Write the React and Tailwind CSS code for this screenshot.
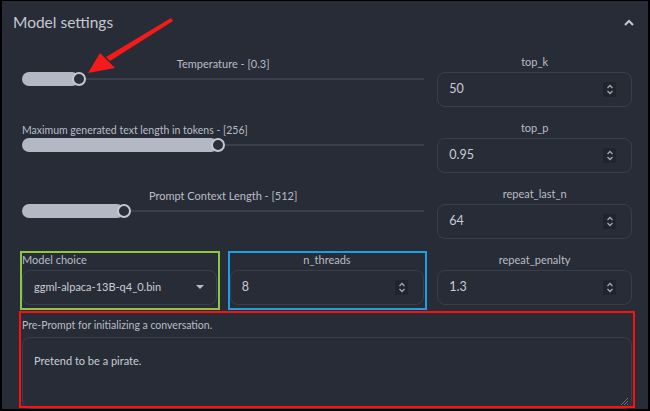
// Model settings panel – llama chat UI, with annotation overlays

import React from "react";

const Spinner = () => (
  <div className="w-[13px] h-[15px] bg-[#21242d] flex items-center justify-center">
    <svg width="8" height="11" viewBox="0 0 8 11" fill="none">
      <path d="M1.5 4 L4 1.5 L6.5 4" stroke="#a3a8b4" strokeWidth="1.3" />
      <path d="M1.5 7 L4 9.5 L6.5 7" stroke="#a3a8b4" strokeWidth="1.3" />
    </svg>
  </div>
);

const NumberField = ({ label, value }) => (
  <div className="flex flex-col">
    <div className="h-[14px] text-center text-[11px] leading-[14px] text-[#b9bdc7]">{label}</div>
    <div className="mt-[3px] h-[35px] rounded-lg border border-[#3a3e4a] flex items-center justify-between pl-[11px] pr-[15px]">
      <span className="text-[12.5px] text-[#c9cdd6]">{value}</span>
      <Spinner />
    </div>
  </div>
);

const Slider = ({ label, percent, centered = true }) => (
  <div className="col-span-2 flex flex-col">
    <div
      className={`h-[14px] mt-[2px] leading-[14px] text-[#b9bdc7] ${centered ? "text-center text-[11px]" : "text-left text-[10.5px]"}`}
    >
      {label}
    </div>
    <div className="relative mt-[1px] h-[14px] flex items-center">
      <div className="w-full h-[2px] bg-[#3a3f4b]" />
      <div
        className="absolute left-0 h-[14px] rounded-full bg-[#b4b8c5]"
        style={{ width: `${percent}%` }}
      />
      <div
        className="absolute w-[14px] h-[14px] -ml-[7px] rounded-full bg-[#2b2f3a] border-2 border-[#c3c7d2]"
        style={{ left: `${percent}%` }}
      />
    </div>
  </div>
);

export default function App() {
  return (
    <div
      className="w-[650px] h-[411px] bg-black pt-[1px] pl-[2px] pr-[2px] pb-[2px]"
      style={{ fontFamily: 'Lato, "Open Sans", sans-serif' }}
    >
      <div className="relative w-full h-full bg-[#282c37] overflow-hidden">
        {/* Header */}
        <div className="flex items-center justify-between pl-[11px] pr-[14px] h-[43px]">
          <span className="text-[15.5px] text-[#c4c8d1]">Model settings</span>
          <svg width="10" height="7" viewBox="0 0 10 7" fill="none">
            <path d="M1 6 L5 2 L9 6" stroke="#c4c8d1" strokeWidth="2" />
          </svg>
        </div>

        {/* Settings grid */}
        <div className="grid grid-cols-3 gap-x-[13px] gap-y-[14px] pl-[20px] pr-[16px] pt-[11px]">
          <Slider label="Temperature - [0.3]" percent={14.2} />
          <NumberField label="top_k" value="50" />

          <Slider label="Maximum generated text length in tokens - [256]" percent={48.6} centered={false} />
          <NumberField label="top_p" value="0.95" />

          <Slider label="Prompt Context Length - [512]" percent={25.4} />
          <NumberField label="repeat_last_n" value="64" />

          {/* Model choice */}
          <div className="relative flex flex-col">
            <div className="h-[14px] text-[11px] leading-[14px] text-[#b9bdc7]">Model choice</div>
            <div className="mt-[3px] h-[35px] rounded-lg border border-[#3a3e4a] flex items-center justify-between pl-[11px] pr-[12px]">
              <span className="text-[11px] text-[#c9cdd6]">ggml-alpaca-13B-q4_0.bin</span>
              <svg width="8" height="5" viewBox="0 0 8 5">
                <path d="M0 0 L8 0 L4 4 Z" fill="#b9bdc7" />
              </svg>
            </div>
            <div className="absolute -left-[2px] -right-[3px] -top-[2px] -bottom-[5px] border-2 border-[#8dc63f]" />
          </div>

          <div className="relative">
            <NumberField label="n_threads" value="8" />
            <div className="absolute -left-[2px] -right-[3px] -top-[2px] -bottom-[5px] border-2 border-[#1ba1e2]" />
          </div>

          <NumberField label="repeat_penalty" value="1.3" />

          {/* Pre-prompt */}
          <div className="relative col-span-3 flex flex-col -mt-[6px]">
            <div className="h-[14px] mt-[5px] text-[10.5px] leading-[14px] text-[#b9bdc7]">
              Pre-Prompt for initializing a conversation.
            </div>
            <div className="relative mt-[5px] h-[72px] rounded-lg border border-[#3a3e4a] px-[11px] pt-[9px]">
              <span className="text-[11px] text-[#c9cdd6]">Pretend to be a pirate.</span>
              <svg className="absolute right-[2px] bottom-[2px]" width="10" height="10" viewBox="0 0 10 10">
                <path d="M9 2 L2 9 M9 5 L5 9 M9 8 L8 9" stroke="#6b7080" strokeWidth="1" />
              </svg>
            </div>
            <div className="absolute -left-[3px] -right-[3px] -top-[2px] h-[97px] border-2 border-[#ff1010]" />
          </div>
        </div>

        {/* Red annotation arrow */}
        <svg className="absolute left-0 top-0" width="200" height="90" viewBox="0 0 200 90">
          <polygon points="169,17 171,20 108,60 104,56" fill="#f51b1b" />
          <polygon points="86,72 98,52 113,67" fill="#f51b1b" />
        </svg>
      </div>
    </div>
  );
}
